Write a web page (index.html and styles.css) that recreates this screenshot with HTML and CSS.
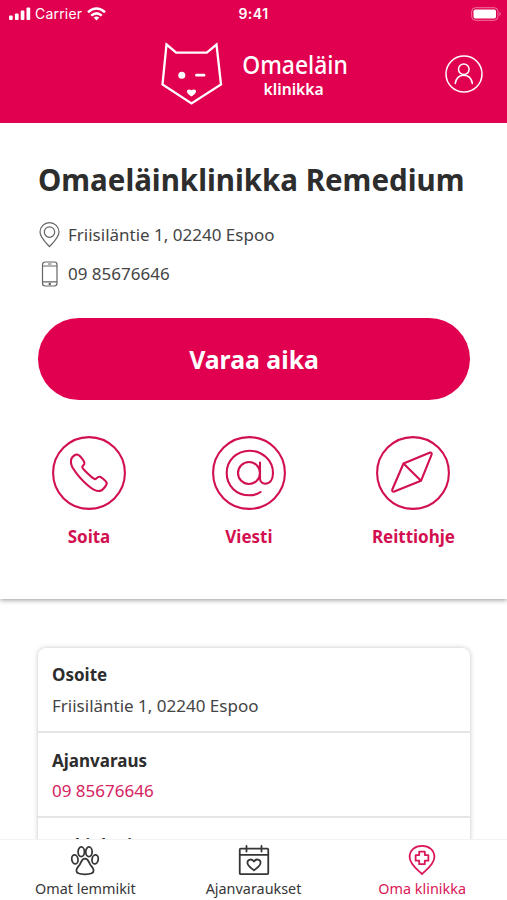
FILE: index.html
```html
<!DOCTYPE html>
<html lang="fi">
<head>
<meta charset="utf-8">
<title>Omaeläinklinikka</title>
<link rel="stylesheet" href="styles.css">
</head>
<body>
<div class="app">
  <header class="header">
    <div class="status">
      <div class="carrier">
        <svg width="22" height="14" viewBox="0 0 22 14" fill="#fff"><rect x="0" y="8.5" width="3.7" height="4.5" rx="1"/><rect x="5.9" y="6.5" width="3.7" height="6.5" rx="1"/><rect x="11.7" y="3.5" width="3.7" height="9.5" rx="1"/><rect x="17.5" y="0.5" width="3.7" height="12.5" rx="1"/></svg>
        <span>Carrier</span>
        <svg width="19" height="14" viewBox="0 0 19 14" fill="none" stroke="#fff" stroke-width="2.5"><path d="M1 5.2Q9.500-2.300 18 5.200M4.200 8.600Q9.500 4.100 14.800 8.600"/><path fill="#fff" stroke="none" d="M6.700 10.600Q9.500 8.400 12.300 10.600L9.500 13.500Z"/></svg>
      </div>
      <time class="time">9:41</time>
      <svg class="battery" width="31" height="14" viewBox="0 0 31 14"><rect x=".7" y=".7" width="26.300" height="12.600" rx="3.800" fill="none" stroke="#fff" stroke-opacity=".45"/><rect x="2.500" y="2.500" width="22.500" height="9" rx="1.700" fill="#fff"/><path d="M28.500 4.800q2.300 2.200 0 4.400z" fill="#fff" fill-opacity=".55"/></svg>
    </div>
    <div class="brandbar">
      <div class="brand">
        <svg width="62" height="63" viewBox="0 0 62 63" fill="none" stroke="#fff" stroke-width="2.300"><path d="M5.500 2.500 15.200 10.600H45.800L55.500 2.500 60 42.500 30.500 61.500 1.500 42.500Z"/><circle cx="20.800" cy="33.300" r="3.500" fill="#fff" stroke="none"/><path d="M35.500 33.200h7.500" stroke-width="2.700" stroke-linecap="round"/><path fill="#fff" stroke="none" d="M30.500 54.500C24 50.500 25.600 47.500 28 47.500q1.700 0 2.500.8.800-.8 2.500-.8c2.400 0 4 3-2.500 7Z"/></svg>
        <div class="wordmark"><span class="word-main">Omaeläin</span><span class="word-sub">klinikka</span></div>
      </div>
      <svg class="profile" width="38" height="38" viewBox="0 0 38 38" fill="none" stroke="#fff" stroke-width="1.500" stroke-linecap="round"><circle cx="19" cy="19" r="18"/><circle cx="18.800" cy="14.300" r="5.300"/><path d="M10.200 28.500c1-5.800 4.700-8.300 8.600-8.300s7.600 2.500 8.600 8.300"/></svg>
    </div>
  </header>

  <main class="content">
    <section class="clinic">
      <h1>Omaeläinklinikka Remedium</h1>
      <div class="contact">
        <svg width="24" height="26" viewBox="0 0 24 26" fill="none" stroke="#666" stroke-width="1.200"><path d="M11.500 24.600C8 20.800 2 15.600 2 10.100a9.500 9.500 0 0 1 19 0C21 15.600 15 20.800 11.500 24.600Z"/><circle cx="11.500" cy="10.100" r="5.200"/></svg>
        <span>Friisiläntie 1, 02240 Espoo</span>
      </div>
      <div class="contact">
        <svg width="24" height="26" viewBox="0 0 24 26" fill="none" stroke="#666" stroke-width="1.200"><rect x="4.500" y="1" width="14.500" height="24" rx="2.700"/><path d="M4.500 5H19M4.500 20.800H19M10 3h3.500"/><circle cx="11.800" cy="23" r=".7"/></svg>
        <span>09 85676646</span>
      </div>
      <button class="book">Varaa aika</button>
      <div class="actions">
        <a class="action">
          <svg width="74" height="74" viewBox="0 0 74 74"><circle cx="37" cy="37" r="35.900"/><path d="M19.500 22.500c1-1.800 3.500-3.700 5-4 2-.3 3.500 1.500 5 3.300 2.500 3 3.500 4.600 2.700 6.300-.5 1-2 1.700-2 3 0 1.700 10.500 11.500 12.500 12 1.500.3 2.300-2.300 4.700-2.300 1.800 0 6.200 3.800 7.200 5.700 1 2-3.700 7.800-6.600 8.400-3.500.7-7.500-1.500-12-5.400-6.500-5.500-11.500-11.500-15.500-18-1.500-3-2-6.500-1-9Z"/></svg>
          <span>Soita</span>
        </a>
        <a class="action">
          <svg width="74" height="74" viewBox="0 0 74 74"><circle cx="37" cy="37" r="35.900"/><circle cx="37" cy="37" r="11"/><path d="M48 26.500v15.800c0 3.400 2.300 5.400 5.300 5.400 4.500 0 7.700-3.700 7.700-10.700C61 24.300 50 14.700 37.500 14.700S14.700 24.300 14.700 37s9.500 22.300 22.800 22.300c4.500 0 8-1 11-3.300"/></svg>
          <span>Viesti</span>
        </a>
        <a class="action">
          <svg width="74" height="74" viewBox="0 0 74 74"><circle cx="37" cy="37" r="35.900"/><path d="M27.500 27.500 53.500 16.700c1.700-.6 2.700.5 2 2.200L45 44.800 18.300 55.500c-1.700.6-2.500-.5-2-2ZM27.500 27.500 45 44.800"/></svg>
          <span>Reittiohje</span>
        </a>
      </div>
    </section>

    <section class="details">
      <div class="row"><h2>Osoite</h2><p>Friisiläntie 1, 02240 Espoo</p></div>
      <div class="row"><h2>Ajanvaraus</h2><p class="phone">09 85676646</p></div>
      <div class="row"><h2>Aukioloajat</h2></div>
    </section>
  </main>

  <nav class="tabs">
    <a class="tab tab-pets">
      <svg width="32" height="32" viewBox="0 0 32 32"><ellipse cx="5.200" cy="15.300" rx="3.300" ry="4.900" transform="rotate(-10 5.200 15.300)"/><ellipse cx="12" cy="7.300" rx="3.400" ry="5.200"/><ellipse cx="20.200" cy="7.300" rx="3.400" ry="5.200"/><ellipse cx="26.800" cy="15.300" rx="3.300" ry="4.900" transform="rotate(10 26.800 15.300)"/><path d="M16 14.500c-3.500 0-4 3.800-5.700 6.500-1.700 2.500-3.500 3.800-3.500 6.300 0 3.200 4 4 9.200 4s9.200-.8 9.200-4c0-2.500-1.800-3.800-3.500-6.300-1.700-2.700-2.200-6.500-5.700-6.500Z"/></svg>
      <span>Omat lemmikit</span>
    </a>
    <a class="tab tab-bookings">
      <svg width="32" height="32" viewBox="0 0 32 32"><rect x="0.800" y="3.800" width="30.400" height="27.200" rx="1"/><path d="M.8 10.500h30.400M8 1v6M24 1v6"/><path d="M16 27c-3-2.500-7-5-7-8.200 0-3.700 5-4.600 7-1.100 2-3.500 7-2.600 7 1.100C23 22 19 24.500 16 27Z"/></svg>
      <span>Ajanvaraukset</span>
    </a>
    <a class="tab tab-clinic active">
      <svg width="32" height="32" viewBox="0 0 32 32"><path d="M16 31C11.500 26.500 2.800 20.500 2.800 13 2.800 5.500 8.500 1 16 1s13.200 4.500 13.200 12C29.200 20.500 20.500 26.500 16 31Z"/><path d="M13 7h6v3.700h3.800v6H19v3.800h-6v-3.800H9.200v-6H13Z"/></svg>
      <span>Oma klinikka</span>
    </a>
  </nav>
</div>
</body>
</html>
```
FILE: styles.css
```css
* { box-sizing: border-box; }
body { margin: 0; background: #fff; color: #2d2d2d; font-family: "Noto Sans", sans-serif; }
h1, h2, p { margin: 0; }
svg { display: block; flex: none; overflow: visible; }
.app { display: flex; flex-direction: column; width: 507px; height: 900px; overflow: hidden; }

.header { flex: none; height: 123px; background: #e1004f; color: #fff; }
.status { display: grid; grid-template-columns: 1fr auto 1fr; align-items: center; height: 27px; padding: 0 6px 0 9px; font: 14px/20px Inter, sans-serif; }
.carrier { display: flex; align-items: center; gap: 4px; letter-spacing: .2px; }
.carrier svg:last-child { margin-left: 1px; }
.time { margin-right: 3px; font-weight: 600; letter-spacing: .5px; }
.battery { justify-self: end; margin-right: -1px; }
.brandbar { display: flex; align-items: center; justify-content: space-between; padding: 15px 24px 0 161px; }
.brand { display: flex; gap: 19px; }
.wordmark { display: flex; flex-direction: column; align-items: center; width: 106px; padding-top: 5px; white-space: nowrap; }
.word-main { font-size: 26px; line-height: 35px; font-weight: 500; transform: scaleX(.88); }
.word-sub { font-size: 16.5px; line-height: 17px; font-weight: 600; margin-left: -2px; margin-top: -2px; transform: scaleX(.95); }

.content { flex: 1; min-height: 0; overflow: hidden; }
.clinic { height: 476px; padding: 37px 37px 0 38px; background: #fff; box-shadow: 0 1px 5px rgba(0, 0, 0, .42); }
h1 { margin-bottom: 15px; font-size: 29.5px; line-height: 40px; font-weight: 700; white-space: nowrap; }
.contact { display: flex; align-items: center; gap: 6px; height: 39px; font-size: 17px; color: #444; }
.contact span { white-space: nowrap; }
.book { display: block; width: 432px; height: 82px; margin-top: 25px; padding: 0 0 1px; border: 0; border-radius: 41px; background: #e1004f; color: #fff; font: 700 24.8px "Noto Sans", sans-serif; }
.actions { display: flex; justify-content: space-between; margin-top: 36px; padding: 0 15px 0 14px; }
.action { display: flex; flex-direction: column; align-items: center; gap: 15px; color: #d20f50; font-size: 17px; line-height: 24px; font-weight: 700; }
.action svg { fill: none; stroke: currentColor; stroke-width: 2.1; stroke-linejoin: round; stroke-linecap: round; }

.details { width: 432px; margin: 49px 0 0 38px; border-radius: 8px; background: #fff; box-shadow: 0 0 5px rgba(0, 0, 0, .23); }
.row { height: 85px; padding: 14px 14px; border-bottom: 2px solid #e5e5e5; }
.row + .row { padding-top: 15px; }
.row + .row p { margin-top: 4px; }
h2 { font-size: 17px; line-height: 26px; font-weight: 700; }
.row p { margin-top: 5px; font-size: 17px; line-height: 26px; color: #444; }
.row .phone { color: #d62260; }

.tabs { z-index: 1; display: flex; flex: none; justify-content: space-between; height: 61px; padding: 5px 41px 0 35px; border-top: 1px solid #f2f2f2; background: #fff; }
.tab { display: flex; flex-direction: column; align-items: center; gap: 4px; font-size: 14.4px; line-height: 20px; color: #363636; }
.tab-bookings { margin-right: 7px; }
.tab svg { width: 30px; height: 30px; fill: none; stroke: currentColor; stroke-width: 1.9; stroke-linejoin: round; stroke-linecap: round; }
.tab.active { color: #d91656; }
```
